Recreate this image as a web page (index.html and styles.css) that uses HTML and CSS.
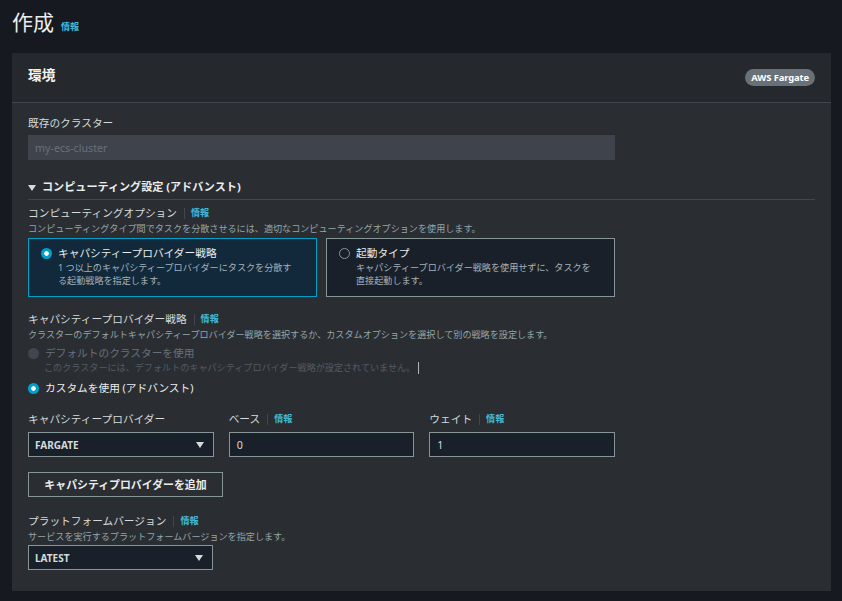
FILE: index.html
```html
<!DOCTYPE html>
<html lang="ja">
<head>
<meta charset="utf-8">
<title>作成</title>
<link rel="stylesheet" href="styles.css">
</head>
<body>
<div class="page">
  <div class="page-head">
    <h1 class="page-title">作成</h1>
    <a class="info" href="#">情報</a>
  </div>

  <section class="card">
    <header class="card-head">
      <h2 class="card-title">環境</h2>
      <span class="badge">AWS Fargate</span>
    </header>

    <div class="card-body">
      <div class="form">
        <div class="label">既存のクラスター</div>
        <div class="input input-disabled">my-ecs-cluster</div>
      </div>

      <div class="expander"><span class="caret"></span>コンピューティング設定 (アドバンスト)</div>

      <div class="form">
        <div class="field field-first">
          <div class="label-row"><span class="label">コンピューティングオプション</span><span class="sep"></span><a class="info" href="#">情報</a></div>
          <div class="desc">コンピューティングタイプ間でタスクを分散させるには、適切なコンピューティングオプションを使用します。</div>
          <div class="tiles">
            <div class="tile tile-selected">
              <span class="radio radio-on"></span>
              <div class="tile-text">
                <div class="tile-title">キャパシティープロバイダー戦略</div>
                <div class="tile-desc">1 つ以上のキャパシティープロバイダーにタスクを分散す<br>る起動戦略を指定します。</div>
              </div>
            </div>
            <div class="tile">
              <span class="radio radio-off"></span>
              <div class="tile-text">
                <div class="tile-title">起動タイプ</div>
                <div class="tile-desc">キャパシティープロバイダー戦略を使用せずに、タスクを<br>直接起動します。</div>
              </div>
            </div>
          </div>
        </div>

        <div class="field field-strategy">
          <div class="label-row"><span class="label">キャパシティープロバイダー戦略</span><span class="sep"></span><a class="info" href="#">情報</a></div>
          <div class="desc">クラスターのデフォルトキャパシティープロバイダー戦略を選択するか、カスタムオプションを選択して別の戦略を設定します。</div>
          <div class="option option-first">
            <span class="radio radio-disabled"></span>
            <span class="option-label option-label-disabled">デフォルトのクラスターを使用</span>
          </div>
          <div class="option-desc">このクラスターには、デフォルトのキャパシティプロバイダー戦略が設定されていません。<span class="text-caret"></span></div>
          <div class="option option-second">
            <span class="radio radio-on"></span>
            <span class="option-label">カスタムを使用 (アドバンスト)</span>
          </div>
        </div>

        <div class="provider-grid">
          <div class="cell">
            <div class="label-row"><span class="label">キャパシティープロバイダー</span></div>
            <div class="select"><span class="select-value">FARGATE</span><span class="arrow"></span></div>
          </div>
          <div class="cell">
            <div class="label-row"><span class="label">ベース</span><span class="sep"></span><a class="info" href="#">情報</a></div>
            <div class="input input-text">0</div>
          </div>
          <div class="cell">
            <div class="label-row"><span class="label">ウェイト</span><span class="sep"></span><a class="info" href="#">情報</a></div>
            <div class="input input-text">1</div>
          </div>
        </div>

        <button class="btn" type="button">キャパシティプロバイダーを追加</button>

        <div class="field field-platform">
          <div class="label-row"><span class="label">プラットフォームバージョン</span><span class="sep"></span><a class="info" href="#">情報</a></div>
          <div class="desc">サービスを実行するプラットフォームバージョンを指定します。</div>
          <div class="select select-narrow"><span class="select-value">LATEST</span><span class="arrow"></span></div>
        </div>
      </div>
    </div>
  </section>
</div>
</body>
</html>
```

FILE: styles.css
```css
* {
  box-sizing: border-box;
  margin: 0;
  padding: 0;
}

html, body {
  background: #16191f;
}

body {
  font-family: "Noto Sans", "Noto Sans CJK JP", sans-serif;
  color: #d5dbdb;
  width: 842px;
  height: 601px;
  overflow: hidden;
}

.page {
  padding: 10px 11px 0 12px;
}

.page-head {
  display: flex;
  align-items: baseline;
  gap: 7px;
}

.page-title {
  font-size: 21px;
  line-height: 25px;
  font-weight: 400;
  color: #eaeded;
}

.info {
  font-size: 9.1px;
  font-weight: 700;
  color: #44b9d6;
  text-decoration: none;
  line-height: 14px;
}

.card {
  margin-top: 18px;
  background: #2a2e33;
}

.card-head {
  height: 50px;
  display: flex;
  align-items: center;
  justify-content: space-between;
  padding: 0 16px;
  background: #25282d;
  border-bottom: 1px solid #414750;
}

.card-title {
  font-size: 13.7px;
  line-height: 18px;
  font-weight: 700;
  color: #f2f3f3;
  margin-bottom: 5px;
}

.badge {
  height: 17px;
  line-height: 17px;
  padding: 0 6px;
  border-radius: 9px;
  background: #687078;
  color: #ffffff;
  font-size: 9.4px;
  font-weight: 700;
  letter-spacing: -0.1px;
}

.card-body {
  padding: 13px 16px 21px;
}

.form {
  width: 587px;
}

.label {
  font-size: 10.7px;
  line-height: 14px;
  color: #d5dbdb;
}

.label-row {
  display: flex;
  align-items: center;
  height: 14px;
}

.sep {
  width: 1px;
  height: 11px;
  background: #414750;
  margin: 0 6px 0 7px;
}

.desc {
  margin-top: 2px;
  font-size: 9.1px;
  line-height: 13px;
  color: #95a5a6;
  white-space: nowrap;
}

.input {
  height: 25px;
  display: flex;
  align-items: center;
  padding: 0 6px;
  font-size: 10.7px;
}

.input-disabled {
  margin-top: 5px;
  background: #3f444c;
  border: 1px solid #3f444c;
  color: #687078;
}

.input-text {
  margin-top: 6px;
  background: #1a2029;
  border: 1px solid #879596;
  color: #d5dbdb;
  padding-left: 7px;
}

.expander {
  margin-top: 20px;
  display: flex;
  align-items: center;
  font-size: 11.1px;
  line-height: 14px;
  font-weight: 700;
  color: #eaeded;
  padding-bottom: 5px;
  border-bottom: 1px solid #414750;
}

.caret {
  width: 0;
  height: 0;
  border-left: 4px solid transparent;
  border-right: 4px solid transparent;
  border-top: 6px solid #d5dbdb;
  margin-right: 6px;
  margin-top: 1px;
}

.field-first {
  margin-top: 6px;
}

.tiles {
  margin-top: 3px;
  display: grid;
  grid-template-columns: 1fr 1fr;
  column-gap: 9px;
}

.tile {
  display: flex;
  align-items: flex-start;
  gap: 6px;
  padding: 6px 20px 9px 12px;
  border: 1px solid #879596;
  background: #1a2029;
}

.tile-selected {
  border-color: #00a1c9;
  background: #12293b;
}

.tile-title {
  font-size: 10.7px;
  line-height: 16px;
  color: #eaeded;
}

.tile-desc {
  font-size: 9.1px;
  line-height: 13px;
  color: #a7b1b9;
  white-space: nowrap;
}

.radio {
  flex: none;
  width: 11px;
  height: 11px;
  border-radius: 50%;
  margin-top: 2.5px;
}

.radio-on {
  background: radial-gradient(circle, #ffffff 0 2px, #00a1c9 2.6px);
}

.radio-off {
  border: 1.3px solid #879596;
}

.radio-disabled {
  background: #414750;
}

.field-strategy {
  margin-top: 15px;
}

.option {
  display: flex;
  align-items: flex-start;
  gap: 6px;
}

.option-first {
  margin-top: 4px;
}

.option-second {
  margin-top: 6px;
}

.option-label {
  font-size: 10.7px;
  line-height: 16px;
  color: #eaeded;
}

.option-label-disabled {
  color: #687078;
}

.option-desc {
  margin-left: 16px;
  font-size: 9.1px;
  line-height: 13px;
  color: #545b64;
  white-space: nowrap;
  display: flex;
  align-items: center;
}

.text-caret {
  width: 1px;
  height: 12px;
  background: #aab7b8;
  margin-left: 3px;
}

.provider-grid {
  margin-top: 16px;
  display: grid;
  grid-template-columns: repeat(3, 1fr);
  column-gap: 15px;
}

.select {
  margin-top: 6px;
  height: 25px;
  display: flex;
  align-items: center;
  justify-content: space-between;
  padding: 0 9px 0 6px;
  background: #1a2029;
  border: 1px solid #879596;
}

.select-narrow {
  width: 185px;
  margin-top: 2px;
}

.select-value {
  font-size: 10px;
  font-weight: 700;
  color: #d5dbdb;
}

.arrow {
  width: 0;
  height: 0;
  border-left: 4px solid transparent;
  border-right: 4px solid transparent;
  border-top: 6px solid #d5dbdb;
}

.btn {
  margin-top: 15px;
  width: 195px;
  height: 25px;
  background: transparent;
  border: 1px solid #879596;
  color: #eaeded;
  font-family: "Noto Sans", "Noto Sans CJK JP", sans-serif;
  font-size: 10.9px;
  font-weight: 700;
  line-height: 14px;
  display: block;
}

.field-platform {
  margin-top: 17px;
}
```
